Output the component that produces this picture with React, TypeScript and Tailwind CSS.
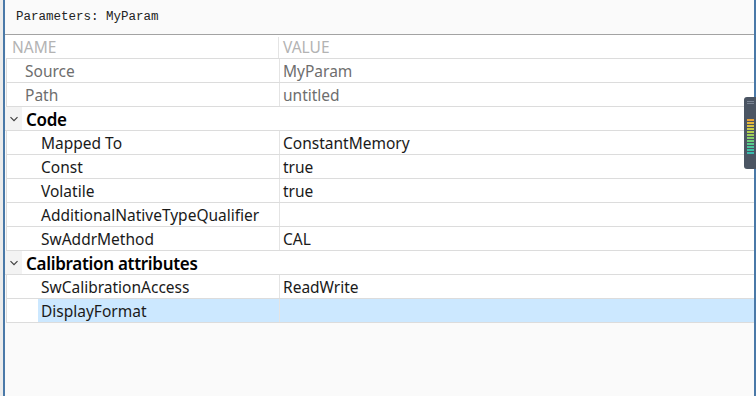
import React from 'react';

type Prop = { name: string; value: string; selected?: boolean };

const groups: { title: string; props: Prop[] }[] = [
  {
    title: 'Code',
    props: [
      { name: 'Mapped To', value: 'ConstantMemory' },
      { name: 'Const', value: 'true' },
      { name: 'Volatile', value: 'true' },
      { name: 'AdditionalNativeTypeQualifier', value: '' },
      { name: 'SwAddrMethod', value: 'CAL' },
    ],
  },
  {
    title: 'Calibration attributes',
    props: [
      { name: 'SwCalibrationAccess', value: 'ReadWrite' },
      { name: 'DisplayFormat', value: '', selected: true },
    ],
  },
];

const Chevron = () => (
  <svg width="10" height="10" viewBox="0 0 10 10" className="shrink-0">
    <path d="M1.5 3.2 L5 6.7 L8.5 3.2" fill="none" stroke="#404040" strokeWidth="1.2" />
  </svg>
);

const Meter = () => {
  const bars = ['#e8a33a', '#e6b83c', '#dcc443', '#c9cc48', '#b5cf4e', '#9fd05a', '#86cf6a', '#6ccd7c', '#58c98c', '#4ac49a', '#40bfa5', '#3bbaae'];
  return (
    <div className="absolute right-0 top-[97px] w-[12px] h-[72px] rounded-l-[3px] bg-[#4b5563] flex flex-col items-center pt-[4px] gap-[1px]">
      <div className="w-[7px] h-[1px] bg-[#7b8594]" />
      <div className="w-[7px] h-[1px] bg-[#7b8594] mb-[14px]" />
      {bars.map((c, i) => (
        <div key={i} className="w-[7px] h-[2px]" style={{ background: c }} />
      ))}
    </div>
  );
};

export default function App() {
  const font = { fontFamily: '"Noto Sans", "Segoe UI", sans-serif' };
  return (
    <div className="relative w-[756px] h-[396px] flex bg-[#fafafa] overflow-hidden" style={font}>
      <div className="w-[3px] bg-[#ececec]" />
      <div className="w-[2px] bg-[#4a79a8]" />
      <div className="flex-1 flex flex-col min-w-0">
        <div
          className="h-[35px] border-b border-[#a3a3a3] flex items-center pl-[11px] text-[12.5px] text-[#222]"
          style={{ fontFamily: '"Liberation Mono", monospace' }}
        >
          Parameters: MyParam
        </div>
        <div className="flex flex-col text-[15.5px] leading-none">
          <div className="h-[24px] flex border-b border-[#dcdcdc] bg-white ml-[1px] pt-[2px]">
            <div className="w-[273px] border-r border-[#e4e4e4] flex items-center pl-[6px] text-[#b3b3b3]">NAME</div>
            <div className="flex-1 flex items-center pl-[4px] text-[#b3b3b3]">VALUE</div>
          </div>
          {[
            ['Source', 'MyParam'],
            ['Path', 'untitled'],
          ].map(([n, v]) => (
            <div key={n} className="h-[24px] flex border-b border-[#dcdcdc] border-l border-l-[#dcdcdc] bg-white ml-[1px]">
              <div className="w-[273px] border-r border-[#e4e4e4] flex items-center pt-[2px] pl-[18px] text-[#6e6e6e]">{n}</div>
              <div className="flex-1 flex items-center pt-[2px] pl-[3px] text-[#6e6e6e]">{v}</div>
            </div>
          ))}
          {groups.map((g) => (
            <React.Fragment key={g.title}>
              <div className="h-[24px] flex border-b border-[#dcdcdc] bg-white">
                <div className="w-[17px] bg-[#f3f3f3] flex items-center justify-center pl-[1px]">
                  <Chevron />
                </div>
                <div className="flex-1 flex items-center pt-[2px] pl-[4px] text-[17px] font-semibold tracking-[-0.3px] text-black">{g.title}</div>
              </div>
              {g.props.map((p) => (
                <div key={p.name} className="h-[24px] flex border-b border-[#dcdcdc] border-l border-l-[#dcdcdc] bg-white ml-[1px]">
                  <div className="w-[31px]" />
                  <div className={`w-[242px] border-r border-[#e4e4e4] flex items-center pt-[2px] pl-[3px] text-[#1a1a1a] ${p.selected ? 'bg-[#cce8ff]' : ''}`}>
                    {p.name}
                  </div>
                  <div className={`flex-1 flex items-center pt-[2px] pl-[3px] text-[#1a1a1a] ${p.selected ? 'bg-[#cce8ff]' : ''}`}>{p.value}</div>
                </div>
              ))}
            </React.Fragment>
          ))}
        </div>
      </div>
      <div className="w-[2px] bg-[#4a79a8]" />
      <Meter />
    </div>
  );
}
